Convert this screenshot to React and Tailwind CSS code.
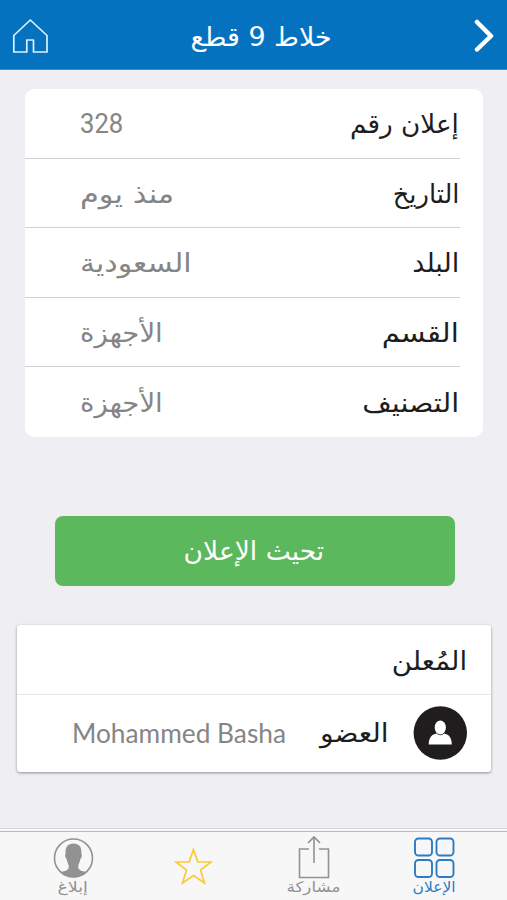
const details = [
  { label: "إعلان رقم", value: "328", labelClass: "scale-x-[1.01]", valueClass: "font-[Roboto] text-[27px] scale-x-[0.95]" },
  { label: "التاريخ", value: "منذ يوم", labelClass: "scale-x-[0.99]", valueClass: "text-[26px] scale-x-[1.17]" },
  { label: "البلد", value: "السعودية", labelClass: "scale-x-[1.04]", valueClass: "text-[26px] scale-x-[1.15]" },
  { label: "القسم", value: "الأجهزة", labelClass: "scale-x-[1.12]", valueClass: "text-[26px] scale-x-[1.06]" },
  { label: "التصنيف", value: "الأجهزة", labelClass: "scale-x-[1.1]", valueClass: "text-[26px] scale-x-[1.06]" },
];

function App() {
  return (
    <div
      dir="rtl"
      className="flex flex-col w-full h-[900px] overflow-hidden bg-[#efeef3] font-['DejaVu_Sans',sans-serif] text-[#1d1d1d]"
    >
      <Header />

      <main className="flex-1">
        <div className="mr-6 ml-[25px] mt-[19px] h-[348px] flex flex-col bg-white rounded-[9px]">
          {details.map((item, i) => (
            <DetailRow key={i} item={item} last={i === details.length - 1} />
          ))}
        </div>

        <button className="block mt-[79px] mr-[52px] w-[400px] h-[70px] pr-[2px] rounded-[8px] bg-[#5cb85c] text-white text-[26px] leading-[70px]">
          <span className="inline-block scale-x-[1.02]">تحيث الإعلان</span>
        </button>

        <Advertiser />
      </main>

      <TabBar />
    </div>
  );
}

function Header() {
  return (
    <header className="h-[70px] shrink-0 flex items-center justify-between pr-[13px] pl-3 bg-[#0572c0] border-b border-[#3d8fcb] text-white">
      <svg width="20" height="34" viewBox="0 0 20 34" fill="none" stroke="currentColor" strokeWidth="4.5" strokeLinecap="round" strokeLinejoin="round" className="mt-[3px]">
        <path d="M3 3 L17 17 L3 30.5" />
      </svg>
      <h1 className="pt-1 text-[26px] leading-8 scale-x-[1.035]">خلاط 9 قطع</h1>
      <svg width="37" height="36" viewBox="0 0 37 36" fill="none" stroke="#d9f2ff" strokeWidth="1.7" strokeLinejoin="round" className="mt-[2px]">
        <path d="M1.8 17.5 L18.3 2 L35 17.5 V34 H21.5 V22 H14.8 V34 H1.8 Z" />
      </svg>
    </header>
  );
}

function DetailRow({ item, last }) {
  return (
    <div className="flex-1 flex flex-col">
      <div className="flex-1 flex items-center justify-between pt-[2px] pr-6 pl-[55px] leading-8 whitespace-nowrap">
        <span className={`text-[26px] origin-right ${item.labelClass}`}>{item.label}</span>
        <span className={`text-[#858585] origin-left ${item.valueClass}`}>{item.value}</span>
      </div>
      {!last && <div className="h-px mr-[23px] bg-[#d2d2d4]" />}
    </div>
  );
}

function Advertiser() {
  return (
    <section className="mt-[39px] mr-4 ml-[17px] h-[147px] bg-white rounded-[3px] shadow-[0_1px_3px_rgba(0,0,0,0.4)]">
      <div className="h-[70px] flex items-center pt-[2px] pr-6 border-b border-[#e7e7e7]">
        <h2 className="text-[26px] leading-8 origin-right scale-x-[1.06]">المُعلن</h2>
      </div>
      <div className="h-[77px] flex items-center pb-[2px] pr-6 pl-[55px]">
        <svg width="54" height="54" viewBox="0 0 54 54" className="shrink-0">
          <circle cx="27.3" cy="27" r="26.7" fill="#1f1d1e" />
          <ellipse cx="27.3" cy="21.5" rx="5.6" ry="6.9" fill="#fff" />
          <path d="M15.7 38.5 C15.7 31 19.5 28.3 23.3 27.5 Q27.3 30.8 31.3 27.5 C35.2 28.3 38.8 31 38.8 38.5 Z" fill="#fff" />
        </svg>
        <span className="mr-6 text-[26px] leading-8 origin-right scale-x-[1.08]">العضو</span>
        <span className="mr-auto font-[Lato] text-[26px] leading-8 text-[#858585] origin-left scale-x-[1.01] whitespace-nowrap">
          Mohammed Basha
        </span>
      </div>
    </section>
  );
}

function TabBar() {
  return (
    <nav className="h-[72px] shrink-0 border-t border-[#d4d4d6] bg-[#f7f7f7]">
      <div className="h-[69px] mt-[2px] border-t border-[#b9b9bb] flex px-[13px] text-[14.5px] leading-4 text-[#929292]">
        <Tab label="الإعلان" className="text-[#2b7cc4]" labelClass="scale-x-[1.07]">
          <svg width="42" height="42" viewBox="0 0 42 42" fill="none" stroke="currentColor" strokeWidth="1.9">
            <rect x="2" y="1.5" width="17" height="17" rx="3.5" />
            <rect x="23.5" y="1.5" width="17" height="17" rx="3.5" />
            <rect x="2" y="23" width="17" height="17" rx="3.5" />
            <rect x="23.5" y="23" width="17" height="17" rx="3.5" />
          </svg>
        </Tab>
        <Tab label="مشاركة" labelClass="scale-x-[1.15]">
          <svg width="32" height="44" viewBox="0 0 32 44" fill="none" stroke="currentColor" strokeWidth="1.6">
            <path d="M11 14 H1.5 V42.5 H30.5 V14 H21 M16 28 V2 M10 8 L16 2 L22 8" />
          </svg>
        </Tab>
        <Tab>
          <svg width="40" height="38" viewBox="0 0 40 38" fill="none" stroke="#fcca35" strokeWidth="1.7">
            <path d="M20.5 2.5 L24.8 14.8 L38 15 L27.5 23 L31.5 36 L20.5 28.5 L9.5 36 L13.5 23 L3 15 L16.2 14.8 Z" />
          </svg>
        </Tab>
        <Tab label="إبلاغ" labelClass="scale-x-[1.2]">
          <svg width="42" height="42" viewBox="0 0 42 42">
            <circle cx="21.5" cy="21" r="19" fill="none" stroke="currentColor" strokeWidth="1.6" />
            <path
              d="M21.5 6.5 C27 6.5 30 10 29.3 16 C30.3 17 29.9 21 28.4 22 C27.9 25 26.7 27 26.3 28.5 V31 C27.5 34 31.5 34.3 35 35.2 C27.5 42 15.5 42 8 35.2 C11.5 34.3 15.5 34 16.7 31 V28.5 C16.3 27 15.1 25 14.6 22 C13.1 21 12.7 17 13.7 16 C13 10 16 6.5 21.5 6.5 Z"
              fill="currentColor"
            />
          </svg>
        </Tab>
      </div>
    </nav>
  );
}

function Tab({ label, className = "", labelClass = "", children }) {
  return (
    <div className={`flex-1 flex flex-col items-center ${className}`}>
      <div className={label ? "h-[47px] flex items-end" : "h-[69px] flex items-center"}>{children}</div>
      {label && <span className={labelClass}>{label}</span>}
    </div>
  );
}

export default App;
